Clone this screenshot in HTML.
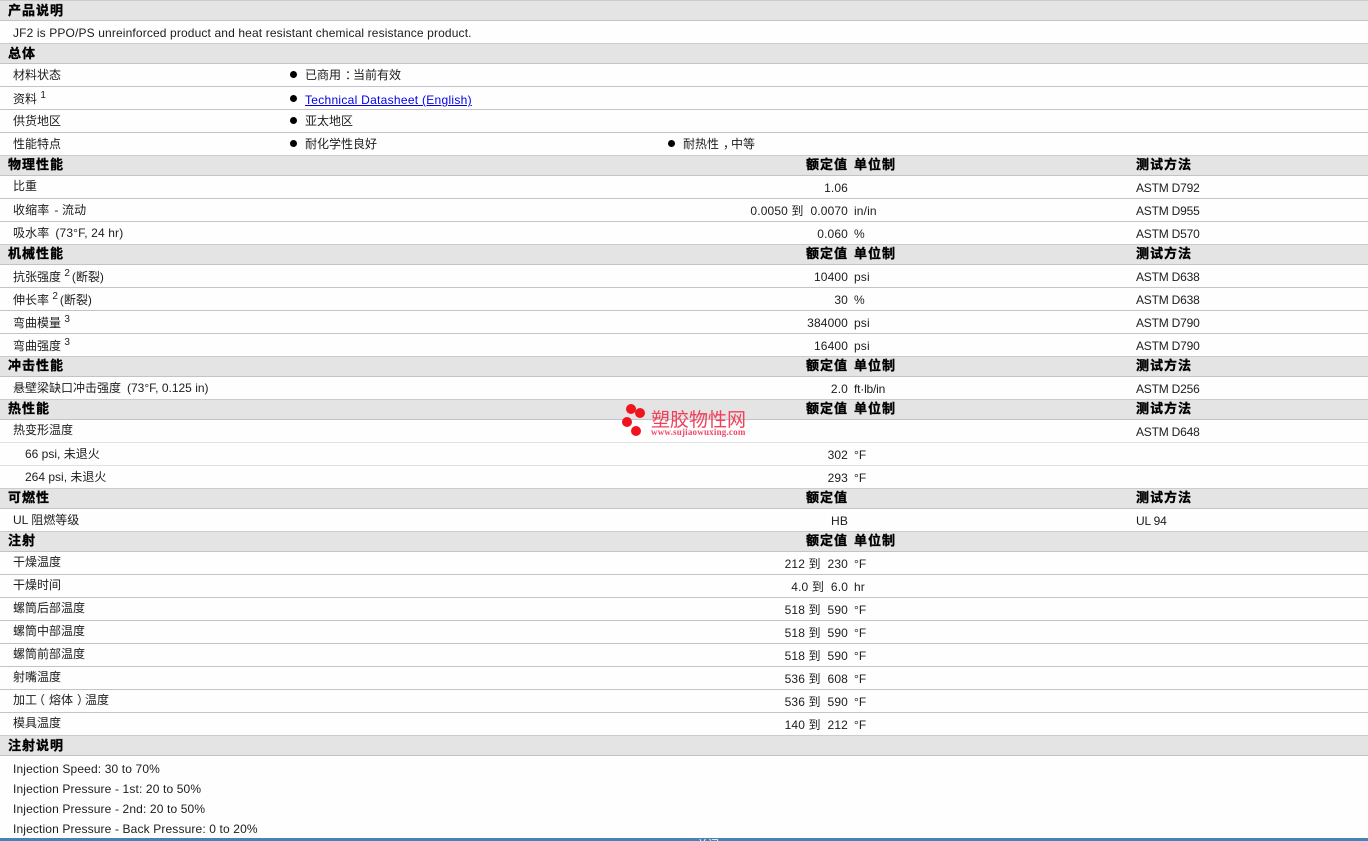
<!DOCTYPE html>
<html lang="zh"><head><meta charset="utf-8"><title>JF2</title>
<style>
html,body{margin:0;padding:0;width:1368px;height:841px;overflow:hidden;background:#fdfefd}
body{position:relative;font:12px/16px "Liberation Sans","WenQuanYi Zen Hei","Noto Sans CJK SC",sans-serif;color:#1c1c1c}
.h{position:absolute;left:0;width:1368px;background:#e4e4e4;border-top:1px solid #ccc;border-bottom:1px solid #c2c2cc;box-sizing:border-box}
.l{position:absolute;left:0;width:1368px;height:1px;background:#c4c4c8}
.t,.b,.r,.rb{position:absolute;white-space:nowrap}
.b,.rb{font-weight:bold;font-size:13px;letter-spacing:1px;color:#000;font-family:"WenQuanYi Zen Hei","Noto Sans CJK SC",sans-serif;-webkit-text-stroke:.35px #000}
.r,.rb{right:520px;text-align:right}
.r,.x,.t.u{letter-spacing:.135px}
.t.m{letter-spacing:-.2px}
.r,.t.u,.t.m{margin-top:1px}
.u{left:854px}.m{left:1136px}.c{left:13px}
.d{position:absolute;width:7px;height:7px;border-radius:50%;background:#000;left:290px}
sup{font-size:10px;line-height:0;position:relative;top:-1px;vertical-align:4px;margin:0 2px 0 0}
a{color:#00e}
.pr{display:inline-block;width:12px;transform:translateX(4px)}
.pl{display:inline-block;width:12px;transform:translateX(-4px)}
.g{margin-left:5px}
.dot{position:absolute;width:10px;height:10px;border-radius:50%;background:#f0141e}
</style></head><body>
<div class="h" style="top:0;height:21px"></div>
<div class="h" style="top:43px;height:21px"></div>
<div class="h" style="top:155px;height:21px"></div>
<div class="h" style="top:244px;height:21px"></div>
<div class="h" style="top:356px;height:21px"></div>
<div class="h" style="top:399px;height:21px"></div>
<div class="h" style="top:488px;height:21px"></div>
<div class="h" style="top:531px;height:21px"></div>
<div class="h" style="top:735px;height:21px"></div>
<div class="l" style="top:86px"></div><div class="l" style="top:109px"></div><div class="l" style="top:132px"></div>
<div class="l" style="top:198px"></div><div class="l" style="top:221px"></div>
<div class="l" style="top:287px"></div><div class="l" style="top:310px"></div><div class="l" style="top:333px"></div>
<div class="l" style="top:442px;background:#e2e2e2"></div><div class="l" style="top:465px;background:#e2e2e2"></div>
<div class="l" style="top:574px"></div><div class="l" style="top:597px"></div><div class="l" style="top:620px"></div><div class="l" style="top:643px"></div><div class="l" style="top:666px"></div><div class="l" style="top:689px"></div><div class="l" style="top:712px"></div>

<div class="b" style="left:8px;top:2px">产品说明</div>
<div class="t c x" style="top:25px">JF2 is PPO/PS unreinforced product and heat resistant chemical resistance product.</div>
<div class="b" style="left:8px;top:45px">总体</div>
<div class="t c" style="top:67px">材料状态</div><div class="d" style="top:71px"></div><div class="t" style="left:305px;top:67px">已商用<span class="pr">：</span>当前有效</div>
<div class="t c" style="top:91px">资料 <sup>1</sup></div><div class="d" style="top:95px"></div><div class="t" style="left:305px;top:92px;letter-spacing:.28px"><a href="#">Technical Datasheet (English)</a></div>
<div class="t c" style="top:113px">供货地区</div><div class="d" style="top:117px"></div><div class="t" style="left:305px;top:113px">亚太地区</div>
<div class="t c" style="top:136px">性能特点</div><div class="d" style="top:140px"></div><div class="t" style="left:305px;top:136px">耐化学性良好</div><div class="d" style="top:140px;left:668px"></div><div class="t" style="left:683px;top:136px">耐热性<span class="pr">，</span>中等</div>

<div class="b" style="left:8px;top:156px">物理性能</div><div class="rb" style="top:156px">额定值</div><div class="b u" style="top:156px">单位制</div><div class="b m" style="top:156px">测试方法</div>
<div class="t c" style="top:178px">比重</div><div class="r" style="top:179px">1.06</div><div class="t m" style="top:179px">ASTM D792</div>
<div class="t c x" style="top:202px">收缩率<span class="g">- 流动</span></div><div class="r" style="top:202px">0.0050 到 &nbsp;0.0070</div><div class="t u" style="top:202px">in/in</div><div class="t m" style="top:202px">ASTM D955</div>
<div class="t c x" style="top:225px">吸水率<span class="g" style="margin-left:6px">(73°F, 24 hr)</span></div><div class="r" style="top:225px">0.060</div><div class="t u" style="top:225px">%</div><div class="t m" style="top:225px">ASTM D570</div>

<div class="b" style="left:8px;top:245px">机械性能</div><div class="rb" style="top:245px">额定值</div><div class="b u" style="top:245px">单位制</div><div class="b m" style="top:245px">测试方法</div>
<div class="t c" style="top:269px">抗张强度 <sup>2</sup>(断裂)</div><div class="r" style="top:268px">10400</div><div class="t u" style="top:268px">psi</div><div class="t m" style="top:268px">ASTM D638</div>
<div class="t c" style="top:292px">伸长率 <sup>2</sup>(断裂)</div><div class="r" style="top:291px">30</div><div class="t u" style="top:291px">%</div><div class="t m" style="top:291px">ASTM D638</div>
<div class="t c" style="top:315px">弯曲模量 <sup>3</sup></div><div class="r" style="top:314px">384000</div><div class="t u" style="top:314px">psi</div><div class="t m" style="top:314px">ASTM D790</div>
<div class="t c" style="top:338px">弯曲强度 <sup>3</sup></div><div class="r" style="top:337px">16400</div><div class="t u" style="top:337px">psi</div><div class="t m" style="top:337px">ASTM D790</div>

<div class="b" style="left:8px;top:357px">冲击性能</div><div class="rb" style="top:357px">额定值</div><div class="b u" style="top:357px">单位制</div><div class="b m" style="top:357px">测试方法</div>
<div class="t c" style="top:380px">悬壁梁缺口冲击强度<span class="g" style="margin-left:6px">(73°F, 0.125 in)</span></div><div class="r" style="top:380px">2.0</div><div class="t u" style="top:380px;letter-spacing:-.2px">ft·lb/in</div><div class="t m" style="top:380px">ASTM D256</div>

<div class="b" style="left:8px;top:400px">热性能</div><div class="rb" style="top:400px">额定值</div><div class="b u" style="top:400px">单位制</div><div class="b m" style="top:400px">测试方法</div>
<div class="t c" style="top:422px">热变形温度</div><div class="t m" style="top:423px">ASTM D648</div>
<div class="t" style="left:25px;top:446px">66 psi, 未退火</div><div class="r" style="top:446px">302</div><div class="t u" style="top:446px">°F</div>
<div class="t" style="left:25px;top:469px">264 psi, 未退火</div><div class="r" style="top:469px">293</div><div class="t u" style="top:469px">°F</div>

<div class="b" style="left:8px;top:489px">可燃性</div><div class="rb" style="top:489px">额定值</div><div class="b m" style="top:489px">测试方法</div>
<div class="t c" style="top:512px">UL 阻燃等级</div><div class="r" style="top:512px">HB</div><div class="t m" style="top:512px">UL 94</div>

<div class="b" style="left:8px;top:532px">注射</div><div class="rb" style="top:532px">额定值</div><div class="b u" style="top:532px">单位制</div>
<div class="t c" style="top:554px">干燥温度</div><div class="r" style="top:555px">212 到 &nbsp;230</div><div class="t u" style="top:555px">°F</div>
<div class="t c" style="top:577px">干燥时间</div><div class="r" style="top:578px">4.0 到 &nbsp;6.0</div><div class="t u" style="top:578px">hr</div>
<div class="t c" style="top:600px">螺筒后部温度</div><div class="r" style="top:601px">518 到 &nbsp;590</div><div class="t u" style="top:601px">°F</div>
<div class="t c" style="top:623px">螺筒中部温度</div><div class="r" style="top:624px">518 到 &nbsp;590</div><div class="t u" style="top:624px">°F</div>
<div class="t c" style="top:646px">螺筒前部温度</div><div class="r" style="top:647px">518 到 &nbsp;590</div><div class="t u" style="top:647px">°F</div>
<div class="t c" style="top:669px">射嘴温度</div><div class="r" style="top:670px">536 到 &nbsp;608</div><div class="t u" style="top:670px">°F</div>
<div class="t c" style="top:692px">加工<span class="pl">（</span>熔体<span class="pr">）</span>温度</div><div class="r" style="top:693px">536 到 &nbsp;590</div><div class="t u" style="top:693px">°F</div>
<div class="t c" style="top:715px">模具温度</div><div class="r" style="top:716px">140 到 &nbsp;212</div><div class="t u" style="top:716px">°F</div>

<div class="b" style="left:8px;top:737px">注射说明</div>
<div class="t c x" style="top:761px">Injection Speed: 30 to 70%</div>
<div class="t c x" style="top:781px">Injection Pressure - 1st: 20 to 50%</div>
<div class="t c x" style="top:801px">Injection Pressure - 2nd: 20 to 50%</div>
<div class="t c x" style="top:821px">Injection Pressure - Back Pressure: 0 to 20%</div>

<div class="dot" style="left:626px;top:404px"></div>
<div class="dot" style="left:635px;top:408px"></div>
<div class="dot" style="left:622px;top:417px"></div>
<div class="dot" style="left:631px;top:426px"></div>
<div class="t" style="left:651px;top:409px;font-size:19px;line-height:20px;color:#f0405a;font-family:'WenQuanYi Zen Hei','Noto Sans CJK SC',sans-serif">塑胶物性网</div>
<div class="t" style="left:651px;top:426px;font:bold 9px/12px 'Liberation Serif',serif;letter-spacing:.2px;color:#f0486a">www.sujiaowuxing.com</div>

<div style="position:absolute;left:0;top:838px;width:1368px;height:3px;background:#4682b4;overflow:hidden"><span style="position:absolute;left:697px;top:0;color:#fff;font-size:11px;line-height:14px">关闭</span></div>
</body></html>
